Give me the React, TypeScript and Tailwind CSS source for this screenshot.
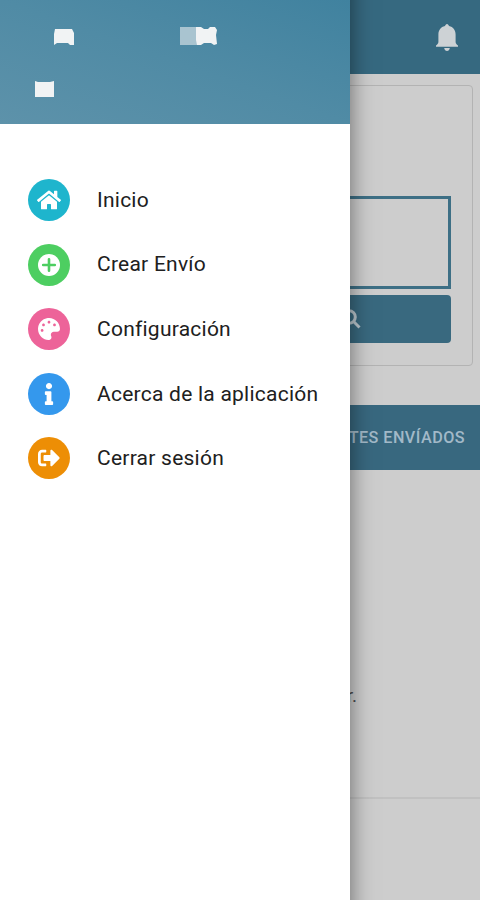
import type { IconType } from "react-icons";
import { FaHome, FaPalette, FaInfo, FaSignOutAlt } from "react-icons/fa";

interface MenuItem {
  label: string;
  icon: IconType;
  color: string;
  size: number;
}

const PlusCircle: IconType = ({ size }) => (
  <svg width={size} height={size} viewBox="0 0 22 22">
    <circle cx="11" cy="11" r="11" fill="white" />
    <path d="M11 5.2v11.6M5.2 11h11.6" stroke="#4dce61" strokeWidth="2.6" strokeLinecap="round" />
  </svg>
);

const BellIcon = () => (
  <svg width="22" height="28" viewBox="0 0 22 28" fill="#cdd2d5">
    <path d="M11 0c1 0 1.6 1 2 2.1 4.3.9 6.6 4.2 6.6 8.4v7.2c0 1.8.9 2.6 2.4 3.7v1.4H0v-1.4c1.5-1.1 2.4-1.900 2.400-3.700v-7.200c0-4.200 2.300-7.500 6.600-8.400C9.400 1 10 0 11 0z" />
    <path d="M8.200 24h5.600c-.3 1.900-1.400 3-2.800 3s-2.500-1.100-2.800-3z" />
  </svg>
);

const SearchIcon = () => (
  <svg
    width="20"
    height="20"
    viewBox="0 0 20 20"
    fill="none"
    stroke="#bac6cd"
    strokeWidth="3"
    className="translate-x-[111px]"
  >
    <circle cx="8" cy="8" r="6.3" />
    <path d="M12.300 12.300l6.200 6.200" />
  </svg>
);

const menuItems: MenuItem[] = [
  { label: "Inicio", icon: FaHome, color: "bg-[#1eb5cd]", size: 24 },
  { label: "Crear Envío", icon: PlusCircle, color: "bg-[#4dce61]", size: 22 },
  { label: "Configuración", icon: FaPalette, color: "bg-[#ed6399]", size: 22 },
  { label: "Acerca de la aplicación", icon: FaInfo, color: "bg-[#3498ed]", size: 22 },
  { label: "Cerrar sesión", icon: FaSignOutAlt, color: "bg-[#ed8e05]", size: 22 },
];

const HomePage = () => {
  return (
    <div className="flex h-full flex-col bg-[#cdcdcd]">
      <header className="flex h-[74px] shrink-0 items-center justify-end bg-[#366980] pr-[22px] pt-0.5">
        <BellIcon />
      </header>

      {/* Search card */}
      <section className="mx-[7px] mt-[11px] h-[281px] shrink-0 rounded border border-[#b3b3b3] px-[21px] pt-[110px]">
        <div className="h-[93px] border-[3px] border-[#3d6f85]" />
        <button className="mt-[6px] flex h-[48px] w-full items-center justify-center rounded bg-[#39697f]">
          <SearchIcon />
        </button>
      </section>

      {/* Tabs */}
      <nav className="mt-[39px] flex h-[65px] shrink-0 items-center justify-end bg-[#38687f] pr-[15px] pt-0.5">
        <span className="text-[16.2px] font-medium tracking-[0.45px] text-[#a2b9c8]">TES ENVÍADOS</span>
      </nav>

      <div className="flex h-[329px] shrink-0 items-start justify-end border-b-2 border-[#c1c1c1] pr-[123px] pt-[214px]">
        <span className="text-[19px] leading-6 text-[#4b4b4b]">r.</span>
      </div>
    </div>
  );
};

const Drawer = () => {
  return (
    <aside className="absolute -inset-y-8 left-0 w-[350px] bg-white pt-8 shadow-[0_0_22px_rgba(0,0,0,0.5)]">
      <div className="relative h-[124px] bg-linear-to-tr from-[#5d92aa] via-[#508ba5] to-[#40829f]">
        {/* Hidden user details */}
        <svg className="absolute inset-0" width="350" height="124" fill="#f1f3f4">
          <path d="M55 29h17l2 4v12h-4l-2-2H57l-3 2V34z" />
          <path d="M180 27h17v18h-17z" fill="#a9c4d0" />
          <path d="M196 27h5l3 2h4l2-2h5l2 3-1 5 1 9-3 1-3-2h-7l-3 2h-4l-1-5z" />
          <path d="M35 81l3 1h12l4-1v16H35z" />
        </svg>
      </div>
      <ul className="flex flex-col gap-[22.6px] pl-[28px] pt-[55px]">
        {menuItems.map(({ label, icon: Icon, color, size }) => (
          <li key={label} className="flex h-[42px] items-center gap-[27px]">
            <span className={`flex size-[42px] items-center justify-center rounded-full text-white ${color}`}>
              <Icon size={size} />
            </span>
            <span className="whitespace-nowrap pt-px text-[21px] tracking-[0.24px] text-[#202020]">{label}</span>
          </li>
        ))}
      </ul>
    </aside>
  );
};

const App = () => {
  return (
    <div className="relative h-screen w-full overflow-hidden font-['Roboto',sans-serif]">
      <HomePage />
      <Drawer />
    </div>
  );
};

export default App;
